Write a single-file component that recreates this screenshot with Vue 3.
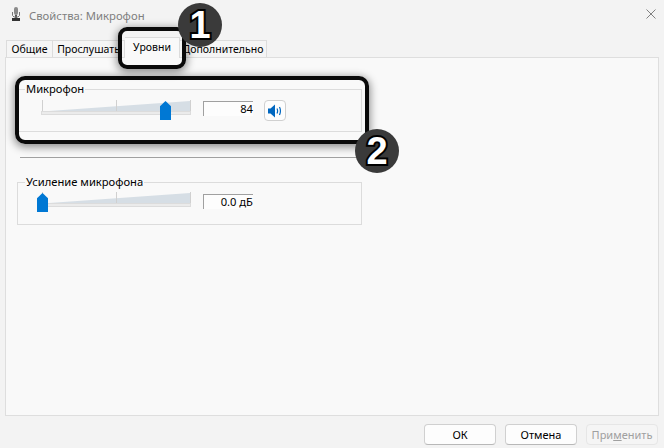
<script setup>
const tabs = [
  { label: 'Общие', width: 47 },
  { label: 'Прослушать', width: 72 },
  { label: 'Уровни', width: 55, active: true },
  { label: 'Дополнительно', width: 87 },
]
const groups = [
  { title: 'Микрофон', value: '84', thumb: 119, mute: true, cls: 'first' },
  { title: 'Усиление микрофона', value: '0.0 дБ', thumb: -4, mute: false, cls: 'second' },
]
</script>

<template>
  <div class="window">
    <header class="titlebar">
      <svg class="mic" width="8" height="15" viewBox="0 0 8 15">
        <rect x="2" y="0" width="4" height="8" rx="2" fill="#8a8a8a" />
        <rect x="3" y="8" width="2" height="3" fill="#555" />
        <path d="M0.500 5V8.500L2 10H6L7.500 8.500V5" stroke="#777" fill="none" />
        <rect x="0" y="11" width="8" height="3" fill="#333" />
      </svg>
      <span class="title">Свойства: Микрофон</span>
      <svg class="close" width="10" height="10" viewBox="0 0 10 10">
        <path d="M0.500 0.500L9.500 9.500M9.500 0.500L0.500 9.500" stroke="#808080" stroke-width="1" fill="none" />
      </svg>
    </header>

    <nav class="tabs">
      <div
        v-for="t in tabs"
        :key="t.label"
        class="tab"
        :class="{ active: t.active }"
        :style="{ width: t.width + 'px' }"
      >{{ t.label }}</div>
    </nav>

    <main class="panel">
      <template v-for="(g, i) in groups" :key="g.title">
        <section class="group" :class="g.cls">
          <span class="legend">{{ g.title }}</span>
          <div class="slider">
            <svg width="150" height="22" viewBox="0 0 150 22">
              <path d="M1 13.500L149 3V13.500Z" fill="#d6dee5" />
              <rect x="0.500" y="13.500" width="149" height="3" fill="#ebebeb" stroke="#dcdcdc" />
              <path d="M1.500 2V13M75.500 2V13M149.500 2V13" stroke="#d0d0d0" fill="none" />
            </svg>
            <span class="thumb" :style="{ left: g.thumb + 'px' }"></span>
          </div>
          <div class="value">{{ g.value }}</div>
          <button v-if="g.mute" class="mute" type="button" aria-label="Звук">
            <svg width="14" height="14" viewBox="0 0 14 14">
              <path d="M0 4.500H2.500L7 0.500V13.500L2.500 9.500H0Z" fill="#0067c0" />
              <path d="M9 4.500Q10.200 7 9 9.500M11.500 3Q13.400 7 11.500 11" stroke="#0067c0" stroke-width="1.200" fill="none" />
            </svg>
          </button>
        </section>
        <hr v-if="i === 0" class="divider" />
      </template>
    </main>

    <footer class="footer">
      <button class="btn" type="button">ОК</button>
      <button class="btn" type="button">Отмена</button>
      <button class="btn disabled" type="button">При<u>м</u>енить</button>
    </footer>

    <div class="mark mark-tab"></div>
    <div class="mark mark-group"></div>
    <div class="badge badge-1">1</div>
    <div class="badge badge-2">2</div>
  </div>
</template>

<style>
html, body { margin: 0; padding: 0; }
</style>

<style scoped>
.window {
  position: relative;
  width: 664px;
  height: 448px;
  overflow: hidden;
  background: #f3f3f3;
  font-family: "Noto Sans", "Open Sans", sans-serif;
  font-size: 11.200px;
  color: #000;
  display: flex;
  flex-direction: column;
}
.titlebar {
  height: 30px;
  flex: none;
  display: flex;
  align-items: center;
  padding: 0 8px 0 12px;
}
.mic { flex: none; margin-top: -1px; }
.title {
  margin-left: 9px;
  font-size: 11.300px;
  color: #808080;
  flex: 1;
}
.close { margin-top: -3px; }
.tabs {
  height: 27px;
  flex: none;
  display: flex;
  align-items: flex-end;
  padding-left: 6px;
}
.tab {
  height: 17px;
  box-sizing: border-box;
  border: 1px solid #dcdcdc;
  border-bottom: 0;
  border-left-width: 0;
  background: #f5f5f5;
  text-align: center;
  font-size: 10.500px;
  line-height: 17px;
  white-space: nowrap;
}
.tab:first-child { border-left-width: 1px; }
.tab.active {
  height: 21px;
  margin-bottom: -1px;
  position: relative;
  background: #f9f9f9;
  line-height: 19px;
}
.panel {
  height: 359px;
  flex: none;
  margin: 0 5px 0 5px;
  box-sizing: border-box;
  border: 1px solid #dedede;
  background: #f9f9f9;
  padding: 31px 296px 0 11px;
}
.group {
  position: relative;
  height: 43px;
  box-sizing: border-box;
  border: 1px solid #dcdcdc;
}
.legend {
  position: absolute;
  left: 7px;
  top: -9px;
  line-height: 16px;
  padding: 0 1px;
  background: #f9f9f9;
  white-space: nowrap;
}
.slider {
  position: absolute;
  left: 23px;
  top: 8px;
  width: 150px;
  height: 22px;
}
.slider svg { display: block; }
.thumb {
  position: absolute;
  top: 3px;
  width: 11px;
  height: 19px;
  background: #0078d4;
  clip-path: polygon(50% 0, 100% 28%, 100% 100%, 0 100%, 0 28%);
}
.value {
  position: absolute;
  left: 185px;
  top: 11px;
  width: 50px;
  height: 15px;
  box-sizing: border-box;
  border-top: 1px solid #a0a0a0;
  border-left: 1px solid #a0a0a0;
  background: #fdfdfd;
  text-align: right;
  line-height: 14px;
}
.mute {
  position: absolute;
  left: 246px;
  top: 10px;
  width: 22px;
  height: 21px;
  padding: 0;
  border: 1px solid #d0d0d0;
  border-radius: 4px;
  background: #fdfdfd;
  display: flex;
  align-items: center;
  justify-content: center;
}
.divider {
  height: 1px;
  border: 0;
  margin: 25px 0 24px 3px;
  background: #a0a0a0;
}
.second .slider { top: 7px; }
.footer {
  flex: 1;
  display: flex;
  justify-content: flex-end;
  align-items: flex-start;
  gap: 9px;
  padding: 8px 6px 0 0;
}
.btn {
  width: 72px;
  height: 21px;
  box-sizing: border-box;
  padding: 0;
  border: 1px solid #d0d0d0;
  border-bottom-color: #b8b8b8;
  border-radius: 4px;
  background: #fdfdfd;
  font: inherit;
  font-size: 11px;
  line-height: 18px;
  color: #000;
}
.btn.disabled {
  background: #f5f5f5;
  border-color: #e6e6e6;
  color: #a0a0a0;
}
.mark {
  position: absolute;
  box-sizing: border-box;
  border: 4px solid #0a0a0a;
  box-shadow: 0 2px 8px 1px rgba(0, 0, 0, 0.45);
}
.mark-tab {
  left: 118px;
  top: 27px;
  width: 68px;
  height: 42px;
  border-radius: 9px;
}
.mark-group {
  left: 15px;
  top: 76px;
  width: 354px;
  height: 68px;
  border-radius: 10px;
}
.badge {
  position: absolute;
  width: 44px;
  height: 44px;
  border-radius: 50%;
  background: #3a3a3a;
  color: #fff;
  font-family: "Liberation Sans", sans-serif;
  font-weight: 700;
  font-size: 38px;
  line-height: 44px;
  text-align: center;
  -webkit-text-stroke: 4px #000;
  paint-order: stroke fill;
}
.badge-1 { left: 178px; top: 3px; }
.badge-2 { left: 355px; top: 129px; }
</style>
